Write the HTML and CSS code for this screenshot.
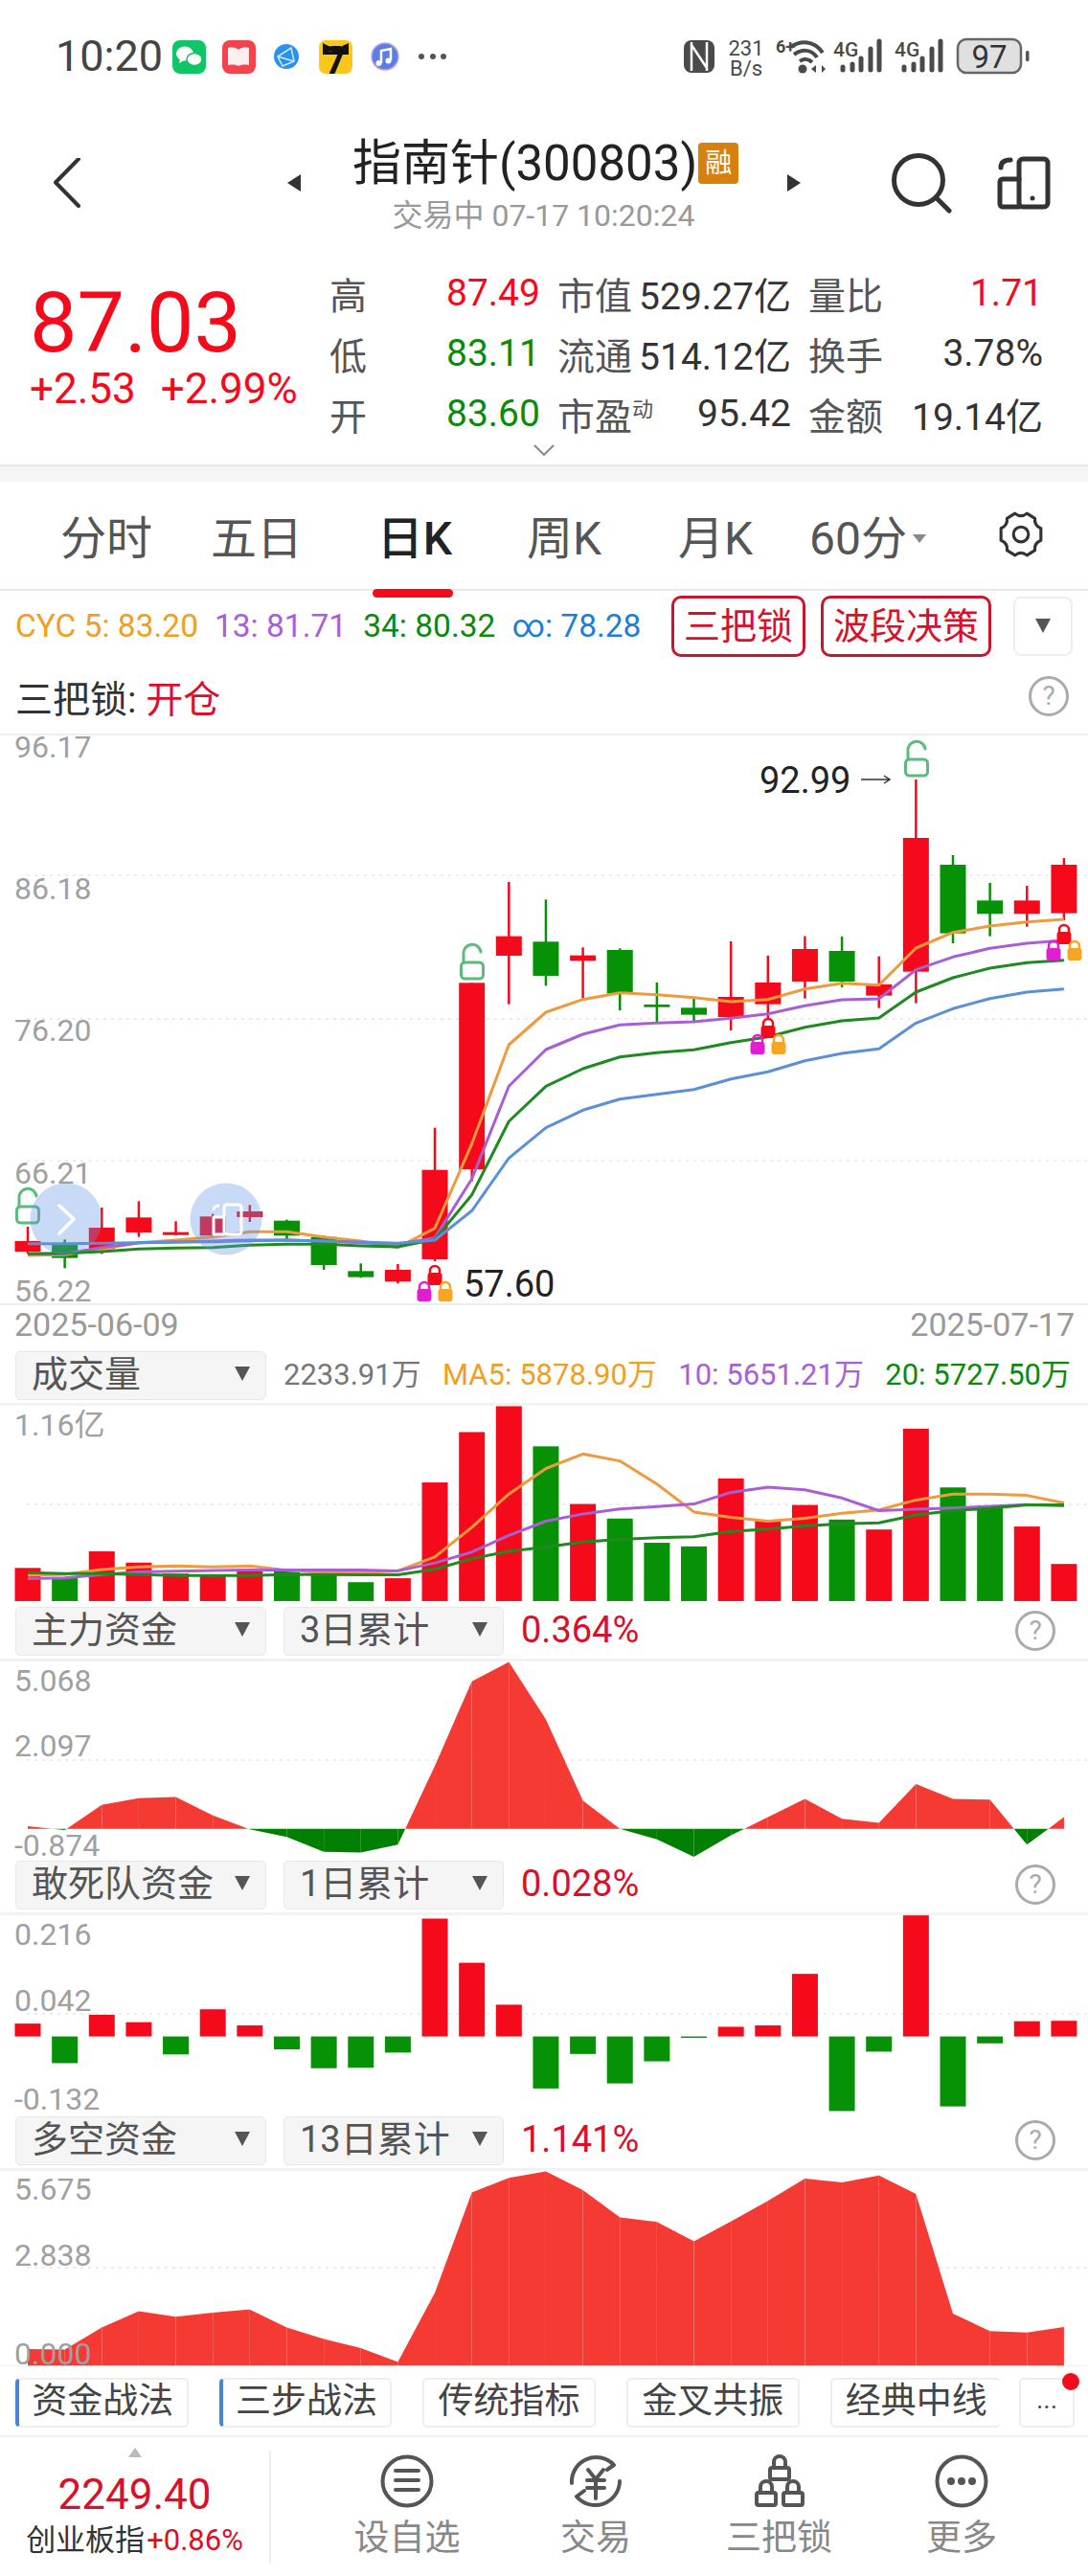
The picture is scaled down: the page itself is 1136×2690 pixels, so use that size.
FILE: index.html
```html
<!DOCTYPE html>
<html lang="zh-CN">
<head>
  <meta charset="UTF-8" />
  <meta name="viewport" content="width=device-width, initial-scale=1.0"/>
  <title>指南针(300803)</title>
  <link rel="stylesheet" href="styles.css">
</head>
<body>
  <div class="statusbar">
    <span class="clock">10:20</span>
    <svg class="status-apps" width="300" height="55" viewBox="170 30 300 55">
      <rect x="180" y="41" width="35" height="35" rx="8" fill="#0fc566"/>
      <ellipse cx="193" cy="55" rx="9" ry="7.500" fill="#fff"/>
      <path d="M188 60l-1 5 5-3z" fill="#fff"/>
      <ellipse cx="203" cy="61" rx="8" ry="6.500" fill="#fff" stroke="#0fc566" stroke-width="1.500"/>
      <rect x="232" y="41" width="35" height="35" rx="8" fill="#f1444f"/>
      <path d="M238 49c6-1 9 0 11 2 2-2 5-3 11-2v18c-6-1-9 0-11 1-2-1-5-2-11-1z" fill="#fdeef0"/>
      <circle cx="299" cy="58" r="13" fill="#2a92ea"/>
      <path d="M290 58l14-9 3 14-12 5zM290 58l17 5" fill="none" stroke="#cfe8fb" stroke-width="1.500"/>
      <rect x="333" y="41" width="35" height="35" rx="7" fill="#fcc71c"/>
      <path d="M337 44l6 3h14l7-3v12h-27z" fill="#111"/>
      <circle cx="345" cy="50" r="2.500" fill="#fcc71c"/>
      <circle cx="357" cy="50" r="2.500" fill="#fcc71c"/>
      <text class="app-seven" x="350.500" y="76" text-anchor="middle">7</text>
      <circle cx="402" cy="58" r="14" fill="#5a7fe0" stroke="#b9a6ee" stroke-width="1.500"/>
      <path d="M398 65V52l10-2v12" fill="none" stroke="#fff" stroke-width="2.500"/>
      <circle cx="395.500" cy="65" r="3" fill="#fff"/>
      <circle cx="405.500" cy="62.500" r="3" fill="#fff"/>
      <circle cx="440" cy="58" r="3" fill="#555"/>
      <circle cx="452" cy="58" r="3" fill="#555"/>
      <circle cx="463" cy="58" r="3" fill="#555"/>
    </svg>
    <svg class="status-right" width="390" height="55" viewBox="700 30 390 55">
      <rect x="714" y="41" width="32" height="34" rx="8" fill="#4a4a4a"/>
      <path d="M722 43v30M738 43v30M722 46l16 24" fill="none" stroke="#fff" stroke-width="2.500"/>
      <text class="st-speed" x="779" y="57" text-anchor="middle">231</text>
      <text class="st-speed" x="779" y="78" text-anchor="middle">B/s</text>
      <text class="st-tiny" x="810" y="54">6+</text>
      <g fill="none" stroke="#4a4a4a" stroke-width="4">
        <path d="M826 48c10-7 24-7 33 6"/>
        <path d="M829 56c8-6 18-6 24 3"/>
        <path d="M835 63c4-3 9-3 13 1"/>
      </g>
      <circle cx="838" cy="71" r="4.500" fill="#4a4a4a"/>
      <path d="M847 71l5-4v8zM855 66v10M858 67l4 4-4 4z" fill="#4a4a4a"/>
      <g id="sig">
        <text class="st-four" x="870" y="58">4G</text>
        <g stroke="#4a4a4a" stroke-width="5" stroke-linecap="round">
          <path d="M880 69v3M890 66v6M899 60v12M909 50v22M918 42v30"/>
        </g>
      </g>
      <use href="#sig" x="64"/>
      <rect x="1000" y="40" width="66" height="35" rx="9" fill="#e0e0e0" stroke="#666" stroke-width="2.500"/>
      <text class="st-batt" x="1033" y="70" text-anchor="middle">97</text>
      <rect x="1071" y="52" width="3.500" height="11" rx="1.500" fill="#555"/>
    </svg>
  </div>

  <div class="titlebar">
    <svg width="28" height="52" viewBox="56 166 28 52"><path d="M82 167L58 191.500 82 216" fill="none" stroke="#333" stroke-width="4" stroke-linecap="round" stroke-linejoin="round"/></svg>
    <span class="tri-left"></span>
    <div class="title-stack">
      <div class="title-line"><span class="title">指南针(300803)</span><span class="rong">融</span></div>
      <div class="subtitle">交易中 07-17 10:20:24</div>
    </div>
    <span class="tri-right"></span>
    <svg class="search-icon" width="64" height="64" viewBox="930 159 64 64" fill="none" stroke="#333" stroke-width="5" stroke-linecap="round"><circle cx="958" cy="188" r="25.500"/><path d="M977 207l13 13"/></svg>
    <svg class="pad-icon" width="58" height="60" viewBox="1039 161 58 60" fill="none" stroke="#333" stroke-width="5" stroke-linecap="round" stroke-linejoin="round"><rect x="1063" y="166" width="30" height="50" rx="4"/><path d="M1063 187h-17a3 3 0 0 0-3 3v23a3 3 0 0 0 3 3h17"/><path d="M1054 167c-6 0-10 2-10 8"/><circle cx="1077" cy="207" r="2.500" fill="#333" stroke="none"/></svg>
  </div>

  <div class="quote">
    <div class="price-box">
      <div class="price">87.03</div>
      <div class="change"><span>+2.53</span><span>+2.99%</span></div>
    </div>
    <div class="quote-table">
      <span class="q-label">高</span><span class="q-num up">87.49</span><span class="q-label">市值</span><span class="q-val">529.27亿</span><span class="q-label q-last">量比</span><span class="q-val up">1.71</span>
      <span class="q-label">低</span><span class="q-num down">83.11</span><span class="q-label">流通</span><span class="q-val">514.12亿</span><span class="q-label q-last">换手</span><span class="q-val">3.78%</span>
      <span class="q-label">开</span><span class="q-num down">83.60</span><span class="q-label">市盈<sup>动</sup></span><span class="q-val">95.42</span><span class="q-label q-last">金额</span><span class="q-val">19.14亿</span>
    </div>
    <svg class="more-chevron" width="22" height="12" viewBox="0 0 22 12"><path d="M1 1l10 10L21 1" fill="none" stroke="#888" stroke-width="2"/></svg>
  </div>

  <div class="band"></div>

  <div class="tabs">
    <span class="tab">分时</span>
    <span class="tab">五日</span>
    <span class="tab active">日K</span>
    <span class="tab">周K</span>
    <span class="tab">月K</span>
    <span class="tab">60分<i class="tab-caret"></i></span>
    <svg class="gear" width="50" height="50" viewBox="0 0 48 48" fill="none" stroke="#333" stroke-width="3" stroke-linejoin="round"><path d="M18 3Q24 8 30 3L38 8Q37 15 44 18V30Q37 33 38 40L30 45Q24 40 18 45L10 40Q11 33 4 30V18Q11 15 10 8Z"/><circle cx="24" cy="24" r="7.500"/></svg>
  </div>

  <div class="cyc-row">
    <span class="c-orange">CYC 5: 83.20</span>
    <span class="c-purple">13: 81.71</span>
    <span class="c-green">34: 80.32</span>
    <span class="c-blue">∞: 78.28</span>
    <span class="red-btn btn-lock">三把锁</span>
    <span class="red-btn btn-wave">波段决策</span>
    <span class="drop-btn"><i class="caret"></i></span>
  </div>

  <div class="lock-row">
    <span>三把锁: <b>开仓</b></span>
    <span class="help">?</span>
  </div>

  <svg class="chart" id="mainChart" width="1136" height="593" viewBox="0 767 1136 593">
    <line class="dash" x1="28" x2="1136" y1="913" y2="913"/>
    <line class="dash" x1="28" x2="1136" y1="1063" y2="1063"/>
    <line class="dash" x1="28" x2="1136" y1="1211" y2="1211"/>
    <g class="labels">
      <text class="axis" x="15" y="790">96.17</text>
      <text class="axis" x="15" y="938">86.18</text>
      <text class="axis" x="15" y="1086">76.20</text>
      <text class="axis" x="15" y="1235">66.21</text>
      <text class="axis" x="15" y="1358">56.22</text>
      <text class="mark" x="793" y="827">92.99</text>
      <path d="M899 813h30M923 809l6 4-6 4" fill="none" stroke="#333" stroke-width="1.500"/>
      <text class="mark" x="484" y="1353">57.60</text>
      <circle cx="69" cy="1272" r="37.500" fill="#6496e6" fill-opacity=".35"/>
      <path d="M62 1258l15 14-15 15" fill="none" stroke="#fff" stroke-width="3.500" stroke-linecap="round" stroke-linejoin="round"/>
      <circle cx="236" cy="1272" r="37.500" fill="#6496e6" fill-opacity=".35"/>
      <g fill="none" stroke="#fff" stroke-width="3" stroke-linejoin="round">
        <rect x="234" y="1257" width="18" height="31" rx="3"/>
        <path d="M234 1270h-11v18h11"/>
        <path d="M229 1258c-4 0-6 1-6 5"/>
      </g>
    </g>
  </svg>

  <div class="dates"><span>2025-06-09</span><span>2025-07-17</span></div>

  <div class="pane-head">
    <span class="sel sel-main">成交量<i class="caret"></i></span>
    <div class="vol-vals">
      <span class="c-gray">2233.91万</span>
      <span class="c-orange">MA5: 5878.90万</span>
      <span class="c-purple">10: 5651.21万</span>
      <span class="c-green">20: 5727.50万</span>
    </div>
  </div>
  <svg class="chart" id="volChart" width="1136" height="204" viewBox="0 1467 1136 204">
    <line class="dash" x1="28" x2="1136" y1="1570" y2="1570"/>
    <g class="labels"><text class="axis" x="15" y="1498">1.16亿</text></g>
  </svg>

  <div class="pane-head gap-a">
    <span class="sel sel-main">主力资金<i class="caret"></i></span>
    <span class="sel sel-sub">3日累计<i class="caret"></i></span>
    <span class="pct">0.364%</span>
    <span class="help">?</span>
  </div>
  <svg class="chart" id="mainFund" width="1136" height="204" viewBox="0 1734 1136 204">
    <line class="dash" x1="28" x2="1136" y1="1837" y2="1837"/>
    <g class="labels">
      <text class="axis" x="15" y="1765">5.068</text>
      <text class="axis" x="15" y="1833">2.097</text>
      <text class="axis" x="15" y="1937">-0.874</text>
    </g>
  </svg>

  <div class="pane-head gap-b">
    <span class="sel sel-main">敢死队资金<i class="caret"></i></span>
    <span class="sel sel-sub">1日累计<i class="caret"></i></span>
    <span class="pct">0.028%</span>
    <span class="help">?</span>
  </div>
  <svg class="chart" id="braveFund" width="1136" height="204" viewBox="0 1999 1136 204">
    <line class="dash" x1="28" x2="1136" y1="2102" y2="2102"/>
    <g class="labels">
      <text class="axis" x="15" y="2030">0.216</text>
      <text class="axis" x="15" y="2099">0.042</text>
      <text class="axis" x="15" y="2202">-0.132</text>
    </g>
  </svg>

  <div class="pane-head gap-a">
    <span class="sel sel-main">多空资金<i class="caret"></i></span>
    <span class="sel sel-sub">13日累计<i class="caret"></i></span>
    <span class="pct">1.141%</span>
    <span class="help">?</span>
  </div>
  <svg class="chart" id="longShort" width="1136" height="203" viewBox="0 2267 1136 203">
    <line class="dash" x1="28" x2="1136" y1="2368" y2="2368"/>
    <g class="labels">
      <text class="axis" x="15" y="2297">5.675</text>
      <text class="axis" x="15" y="2366">2.838</text>
      <text class="axis" x="15" y="2469">0.000</text>
    </g>
  </svg>

  <div class="strategy-tabs">
    <span class="stab marked">资金战法</span>
    <span class="stab marked">三步战法</span>
    <span class="stab">传统指标</span>
    <span class="stab">金叉共振</span>
    <span class="stab cut">经典中线</span>
    <span class="stab more">...<i class="red-dot"></i></span>
  </div>

  <div class="bottom-nav">
    <div class="index-box">
      <i class="index-tri"></i>
      <div class="index-price">2249.40</div>
      <div class="index-name">创业板指<span>+0.86%</span></div>
    </div>
    <div class="nav-items">
      <div class="nav-item">
        <svg width="56" height="56" viewBox="0 0 56 56" fill="none" stroke="#555" stroke-width="4" stroke-linecap="round"><circle cx="28" cy="28" r="25.500"/><path d="M16 17h24M16 27h24M16 37h24"/></svg>
        <span>设自选</span>
      </div>
      <div class="nav-item">
        <svg width="56" height="56" viewBox="0 0 56 56" fill="none" stroke="#555" stroke-width="4" stroke-linecap="round" stroke-linejoin="round"><path d="M3 30A25.500 25.500 0 0 1 47 11l-7 5"/><path d="M53 28A25.500 25.500 0 0 1 8 44l8-6"/><path d="M20 16l8 10 8-10M19 27h18M19 35h18M28 26v20"/></svg>
        <span>交易</span>
      </div>
      <div class="nav-item">
        <svg width="56" height="56" viewBox="0 0 56 56" fill="none" stroke="#555" stroke-width="4" stroke-linejoin="round"><rect x="18" y="14" width="20" height="12" rx="2"/><path d="M22 14V8a6 6 0 0 1 12 0v6"/><rect x="4" y="40" width="20" height="13" rx="2"/><path d="M8 40v-6a6 6 0 0 1 12 0v6"/><rect x="32" y="40" width="20" height="13" rx="2"/><path d="M36 40v-6a6 6 0 0 1 12 0v6"/></svg>
        <span>三把锁</span>
      </div>
      <div class="nav-item">
        <svg width="56" height="56" viewBox="0 0 56 56" fill="none" stroke="#555" stroke-width="4"><circle cx="28" cy="28" r="25.500"/><circle cx="17" cy="28" r="4" fill="#555" stroke="none"/><circle cx="28" cy="28" r="4" fill="#555" stroke="none"/><circle cx="39" cy="28" r="4" fill="#555" stroke="none"/></svg>
        <span>更多</span>
      </div>
    </div>
  </div>

  <script src="chart.js"></script>
</body>
</html>
```

FILE: styles.css
```css
* {
  box-sizing: border-box;
}
html, body {
  margin: 0;
  padding: 0;
}
body {
  width: 1136px;
  height: 2690px;
  overflow: hidden;
  background: #fff;
  color: #333;
  font-family: Roboto, "Noto Sans CJK SC", sans-serif;
}
i {
  font-style: normal;
}

/* status bar */
.statusbar {
  display: flex;
  align-items: center;
  height: 116px;
}
.clock {
  width: 112px;
  margin-left: 58px;
  font-size: 45px;
  color: #444;
}
.status-right {
  margin-left: 230px;
}
.app-seven {
  font-size: 38px;
  font-weight: 700;
  fill: #111;
}
.st-speed {
  font-size: 22px;
  fill: #4a4a4a;
}
.st-tiny {
  font-size: 18px;
  font-weight: 700;
  fill: #4a4a4a;
}
.st-four {
  font-size: 21px;
  font-weight: 500;
  fill: #4a4a4a;
}
.st-batt {
  font-size: 33px;
  fill: #333;
}

/* title */
.titlebar {
  display: flex;
  align-items: center;
  height: 150px;
  padding-left: 56px;
}
.tri-left {
  width: 0;
  height: 0;
  margin-left: 216px;
  border-top: 9px solid transparent;
  border-bottom: 9px solid transparent;
  border-right: 14px solid #333;
}
.tri-right {
  width: 0;
  height: 0;
  border-top: 9px solid transparent;
  border-bottom: 9px solid transparent;
  border-left: 14px solid #333;
}
.title-stack {
  width: 400px;
  margin: 0 54px;
}
.title-line {
  display: flex;
  align-items: center;
  height: 60px;
}
.title {
  margin-top: -6px;
  font-size: 51px;
  white-space: nowrap;
  color: #222;
}
.rong {
  flex: none;
  width: 42px;
  height: 43px;
  margin-top: 2px;
  margin-left: 1px;
  background: #d8800f;
  border-radius: 4px;
  color: #fff;
  font-size: 28px;
  line-height: 43px;
  text-align: center;
}
.subtitle {
  margin-top: 8px;
  margin-left: -1px;
  text-align: center;
  font-size: 32px;
  line-height: 36px;
  color: #999;
  white-space: nowrap;
}
.search-icon {
  margin-left: 95px;
}
.pad-icon {
  margin-left: 45px;
}

/* quote */
.quote {
  position: relative;
  display: flex;
  height: 219px;
  padding-top: 8px;
}
.price-box {
  width: 344px;
  padding-left: 31px;
  color: #f50a1c;
}
.price {
  margin-top: 22px;
  font-size: 88px;
  line-height: 82px;
}
.change {
  display: flex;
  gap: 26px;
  margin-top: 9px;
  font-size: 44px;
  line-height: 38px;
}
.quote-table {
  display: grid;
  grid-template-columns: 122px 116px 76px 168px 94px 169px;
  grid-auto-rows: 63px;
  align-items: center;
  font-size: 39px;
}
.q-label {
  color: #555;
  white-space: nowrap;
}
.q-label sup {
  font-size: 22px;
  line-height: 0;
}
.q-last {
  padding-left: 18px;
}
.q-val {
  text-align: right;
  color: #333;
}
.up {
  color: #f50a1c;
}
.q-val.up {
  color: #f50a1c;
}
.down {
  color: #088c08;
}
.more-chevron {
  position: absolute;
  left: 557px;
  top: 198px;
}
.band {
  height: 18px;
  background: #f5f5f5;
  border-top: 2px solid #e8e8e8;
}

/* period tabs */
.tabs {
  display: grid;
  grid-template-columns: 158px 156px 174px 138px 178px 140px 1fr;
  align-items: center;
  height: 114px;
  padding-left: 32px;
  padding-bottom: 3px;
  border-bottom: 2px solid #eaeaea;
}
.tab {
  position: relative;
  font-size: 48px;
  color: #555;
  text-align: center;
  white-space: nowrap;
}
.tab.active {
  color: #222;
  font-weight: 500;
}
.tab.active::after {
  content: "";
  position: absolute;
  left: 43px;
  bottom: -31px;
  width: 84px;
  height: 9px;
  background: #f50a1c;
  border-radius: 5px;
}
.tab-caret {
  display: inline-block;
  width: 0;
  height: 0;
  margin-left: 6px;
  vertical-align: 12px;
  border-left: 7px solid transparent;
  border-right: 7px solid transparent;
  border-top: 9px solid #888;
}
.gear {
  justify-self: end;
  margin-right: 45px;
}

/* indicator legend */
.cyc-row {
  display: flex;
  align-items: center;
  height: 73px;
  padding-left: 16px;
  font-size: 33.5px;
  line-height: 1;
  white-space: nowrap;
}
.cyc-row span + span {
  margin-left: 17px;
}
.c-orange {
  color: #f0a020;
}
.c-purple {
  color: #a860d8;
}
.c-green {
  color: #0a8a0a;
}
.c-blue {
  color: #1a7fd8;
}
.c-gray {
  color: #777;
}
.cyc-row .red-btn {
  display: flex;
  align-items: center;
  justify-content: center;
  height: 64px;
  border: 3px solid #c8162c;
  border-radius: 10px;
  color: #d8102a;
  font-size: 38px;
}
.cyc-row .btn-lock {
  width: 140px;
  margin-left: auto;
}
.cyc-row .btn-wave {
  width: 178px;
  margin-left: 16px;
}
.cyc-row .drop-btn {
  display: flex;
  align-items: center;
  justify-content: center;
  width: 62px;
  height: 62px;
  margin-left: 23px;
  margin-right: 16px;
  border: 2px solid #eee;
  border-radius: 8px;
}
.caret {
  width: 0;
  height: 0;
  border-left: 8px solid transparent;
  border-right: 8px solid transparent;
  border-top: 15px solid #555;
}
.lock-row {
  display: flex;
  align-items: center;
  justify-content: space-between;
  height: 78px;
  padding: 0 20px 2px 16px;
  border-bottom: 2px solid #eee;
  font-size: 39px;
  color: #333;
}
.lock-row b {
  font-weight: 400;
  color: #d8102a;
}
.help {
  display: flex;
  align-items: center;
  justify-content: center;
  width: 42px;
  height: 42px;
  border: 3px solid #aaa;
  border-radius: 50%;
  color: #aaa;
  font-size: 28px;
  line-height: 1;
}

/* charts */
.chart {
  display: block;
  overflow: visible;
}
.dash {
  stroke: #e6e6e6;
  stroke-width: 1.5;
  stroke-dasharray: 3 5;
}
.axis {
  font-size: 32px;
  fill: #a0a0a0;
}
.mark {
  font-size: 38px;
  fill: #222;
}
.dates {
  display: flex;
  justify-content: space-between;
  height: 50px;
  padding: 1px 14px 0 15px;
  border-top: 2px solid #eee;
  font-size: 34px;
  line-height: 38px;
  color: #999;
}
.pane-head {
  display: flex;
  align-items: flex-start;
  gap: 18px;
  height: 57px;
  padding-left: 16px;
  padding-right: 34px;
  border-bottom: 3px solid #f2f2f2;
}
.gap-a {
  margin-top: 6px;
}
.gap-b {
  margin-top: 4px;
}
.sel {
  display: flex;
  align-items: center;
  justify-content: space-between;
  height: 51px;
  padding: 0 16px 4px 16px;
  background: #f5f5f5;
  border: 1px solid #e8e8e8;
  border-radius: 5px;
  font-size: 38px;
  line-height: 1;
  color: #555;
  white-space: nowrap;
}
.sel-main {
  width: 262px;
}
.sel-sub {
  width: 230px;
}
.pct {
  font-size: 38px;
  line-height: 48px;
  color: #d8102a;
}
.pane-head .help {
  margin-left: auto;
  margin-top: 4px;
}
.vol-vals {
  display: flex;
  flex: 1;
  justify-content: space-between;
  margin-right: -16px;
  font-size: 31px;
  line-height: 49px;
  white-space: nowrap;
}

/* strategy tabs */
.strategy-tabs {
  display: flex;
  gap: 32px;
  height: 75px;
  padding: 12px 14px 0 16px;
  border-top: 1px solid #f0f0f0;
  border-bottom: 2px solid #eee;
}
.stab {
  position: relative;
  width: 181px;
  height: 52px;
  background: #fff;
  border: 2px solid #eee;
  border-radius: 5px;
  color: #444;
  font-size: 37px;
  line-height: 46px;
  text-align: center;
  white-space: nowrap;
}
.stab.marked {
  border-left: 4px solid #4a84d8;
}
.stab.cut {
  border-right: 0;
  width: 179px;
}
.stab.more {
  width: 58px;
  margin-left: -13px;
  font-size: 28px;
  line-height: 42px;
}
.red-dot {
  position: absolute;
  top: -7px;
  right: -7px;
  width: 18px;
  height: 18px;
  background: #f50a1c;
  border-radius: 50%;
}

/* bottom nav */
.bottom-nav {
  display: flex;
  height: 144px;
}
.index-box {
  display: flex;
  flex-direction: column;
  align-items: center;
  width: 281px;
  padding-top: 11px;
}
.index-tri {
  width: 0;
  height: 0;
  border-left: 7px solid transparent;
  border-right: 7px solid transparent;
  border-bottom: 10px solid #bbb;
}
.index-price {
  margin-top: 14px;
  font-size: 44px;
  line-height: 50px;
  color: #d8102a;
}
.index-name {
  margin-top: 5px;
  font-size: 31px;
  line-height: 36px;
  color: #333;
  white-space: nowrap;
}
.index-name span {
  margin-left: 2px;
  color: #d8102a;
}
.nav-items {
  display: grid;
  grid-template-columns: 196px 198px 185px 196px;
  height: 118px;
  margin-top: 14px;
  padding-top: 4px;
  padding-left: 44px;
  border-left: 2px solid #eee;
}
.nav-item {
  display: flex;
  flex-direction: column;
  align-items: center;
  font-size: 37px;
  line-height: 44px;
  color: #888;
}
.nav-item span {
  margin-top: 10px;
}
```

FILE: chart.js
```js
const NS = 'http://www.w3.org/2000/svg';
const RED = '#f50a1c';
const GREEN = '#079107';
const AREA_RED = '#f43a33';
const AREA_GREEN = '#007f00';
const BAR_W = 27;

const colX = i => 29 + 38.64 * i;

// all y values below were read from the picture, scaled per pane by toY
function add(svg, tag, attrs) {
  const el = document.createElementNS(NS, tag);
  Object.keys(attrs).forEach(k => el.setAttribute(k, attrs[k]));
  svg.insertBefore(el, svg.querySelector('.labels'));
  return el;
}

function drawLine(svg, values, toY, color, width) {
  const points = values.map((v, i) => `${colX(i).toFixed(1)},${toY(v).toFixed(1)}`).join(' ');
  add(svg, 'polyline', {
    points,
    fill: 'none',
    stroke: color,
    'stroke-width': width,
    'stroke-linejoin': 'round'
  });
}

function drawBar(svg, i, y1, y2, color) {
  add(svg, 'rect', {
    x: colX(i) - BAR_W / 2,
    y: Math.min(y1, y2),
    width: BAR_W,
    height: Math.max(Math.abs(y2 - y1), 1.5),
    fill: color
  });
}

// one polygon per column gap, split where the value crosses zero
function drawArea(svg, values, toY, zero) {
  const y0 = toY(zero);
  const quad = (x1, y1, x2, y2, color) => add(svg, 'polygon', {
    points: `${x1},${y0} ${x1},${y1} ${x2},${y2} ${x2},${y0}`,
    fill: color
  });
  for (let i = 0; i < values.length - 1; i++) {
    const x1 = colX(i);
    const x2 = colX(i + 1);
    const y1 = toY(values[i]);
    const y2 = toY(values[i + 1]);
    if ((y1 - y0) * (y2 - y0) >= 0) {
      quad(x1, y1, x2, y2, y1 <= y0 && y2 <= y0 ? AREA_RED : AREA_GREEN);
    } else {
      const xm = x1 + (x2 - x1) * (y0 - y1) / (y2 - y1);
      quad(x1, y1, xm, y0, y1 < y0 ? AREA_RED : AREA_GREEN);
      quad(xm, y0, x2, y2, y2 < y0 ? AREA_RED : AREA_GREEN);
    }
  }
}

function drawLock(svg, cx, top, color) {
  add(svg, 'path', {
    d: `M${cx - 5} ${top + 10}v-4a5 5 0 0 1 10 0v4`,
    fill: 'none',
    stroke: color,
    'stroke-width': 2.5
  });
  add(svg, 'rect', { x: cx - 7.5, y: top + 8, width: 15, height: 13, rx: 3, fill: color });
}

function drawOpenLock(svg, left, top) {
  const green = '#5cba7d';
  add(svg, 'path', {
    d: `M${left + 4} ${top + 18}v-8a9 9 0 0 1 18 -3`,
    fill: 'none',
    stroke: green,
    'stroke-width': 3,
    'stroke-linecap': 'round'
  });
  add(svg, 'rect', {
    x: left + 1.5,
    y: top + 18,
    width: 23,
    height: 17,
    rx: 4,
    fill: 'none',
    stroke: green,
    'stroke-width': 3
  });
}

// candles: wick top, body top, body bottom, wick bottom, r or g
const candles = [
  [1080, 1125, 1158, 1165, 'r'], [1120, 1135, 1178, 1210, 'g'], [1020, 1083, 1150, 1165, 'r'],
  [1000, 1051, 1098, 1112, 'r'], [1063, 1097, 1106, 1107, 'r'], [1040, 1048, 1108, 1110, 'r'],
  [1012, 1032, 1050, 1065, 'r'], [1058, 1061, 1108, 1120, 'g'], [1108, 1112, 1200, 1215, 'g'],
  [1195, 1219, 1238, 1240, 'g'], [1197, 1215, 1252, 1258, 'r'], [770, 902, 1182, 1188, 'r'],
  [316, 316, 900, 938, 'r'], [0, 170, 231, 383, 'r'], [55, 187, 294, 325, 'g'],
  [205, 230, 247, 365, 'r'], [208, 213, 350, 402, 'g'], [315, 384, 392, 440, 'g'],
  [360, 394, 416, 435, 'g'], [186, 360, 423, 465, 'r'], [231, 315, 383, 430, 'r'],
  [170, 210, 312, 365, 'r'], [171, 216, 312, 330, 'g'], [233, 321, 356, 395, 'r'],
  [-321, -138, 281, 380, 'r'], [-84, -54, 161, 192, 'g'], [3, 58, 100, 170, 'g'],
  [12, 58, 100, 140, 'r'], [-75, -54, 98, 120, 'r']
];

const mainSvg = document.getElementById('mainChart');
const mainY = z => 920 + z / 3;

candles.forEach((c, i) => {
  const color = c[4] === 'r' ? RED : GREEN;
  add(mainSvg, 'line', {
    x1: colX(i), x2: colX(i), y1: mainY(c[0]), y2: mainY(c[3]),
    stroke: color, 'stroke-width': 2.5
  });
  drawBar(mainSvg, i, mainY(c[1]), mainY(c[2]), color);
});

drawLine(mainSvg, [1170, 1168, 1150, 1130, 1122, 1112, 1096, 1096, 1112, 1125, 1145, 1085, 820, 510, 408, 368, 347, 353, 362, 375, 368, 335, 317, 323, 207, 158, 138, 125, 117], mainY, '#ee9a3e', 3);
drawLine(mainSvg, [1165, 1165, 1145, 1130, 1128, 1125, 1122, 1122, 1125, 1130, 1135, 1115, 930, 640, 525, 477, 448, 442, 438, 427, 413, 388, 369, 366, 275, 235, 208, 192, 183], mainY, '#a95fd4', 3);
drawLine(mainSvg, [1165, 1163, 1158, 1150, 1147, 1145, 1138, 1135, 1135, 1140, 1143, 1120, 980, 750, 640, 585, 548, 535, 526, 503, 485, 455, 435, 426, 345, 300, 270, 253, 245], mainY, '#1f8a1f', 3);
drawLine(mainSvg, [1133, 1133, 1132, 1130, 1128, 1127, 1124, 1122, 1125, 1128, 1132, 1122, 1030, 865, 770, 715, 680, 665, 650, 617, 595, 560, 537, 523, 442, 397, 365, 345, 335], mainY, '#5b8fd8', 3);

drawOpenLock(mainSvg, 16, 1241);
drawOpenLock(mainSvg, 480, 986);
drawOpenLock(mainSvg, 944, 774);

[[454, 1320], [802, 1062], [1111, 964]].forEach(([x, y]) => {
  drawLock(mainSvg, x, y, RED);
  drawLock(mainSvg, x - 11, y + 17, '#e020d0');
  drawLock(mainSvg, x + 11, y + 17, '#f5a623');
});

// volume
const volSvg = document.getElementById('volChart');
const volY = z => 1400 + z / 2.89;
const volTops = [683, 712, 633, 667, 700, 705, 690, 693, 702, 726, 714, 425, 273, 195, 316, 490, 534, 607, 618, 413, 540, 493, 537, 567, 263, 440, 500, 558, 671];
volTops.forEach((top, i) => {
  drawBar(volSvg, i, volY(top), volY(783), candles[i][4] === 'r' ? RED : GREEN);
});
drawLine(volSvg, [705, 702, 688, 680, 677, 680, 677, 690, 697, 697, 692, 650, 560, 460, 383, 339, 360, 430, 514, 530, 542, 533, 518, 508, 478, 460, 460, 464, 487], volY, '#ee9a3e', 3);
drawLine(volSvg, [715, 713, 703, 695, 693, 691, 689, 689, 689, 689, 692, 668, 635, 585, 542, 520, 505, 498, 490, 455, 439, 447, 472, 510, 506, 502, 497, 492, 496], volY, '#a95fd4', 3);
drawLine(volSvg, [697, 700, 700, 703, 706, 706, 706, 703, 703, 704, 704, 687, 655, 633, 620, 605, 597, 592, 589, 573, 566, 556, 550, 547, 523, 510, 503, 493, 493], volY, '#1f8a1f', 3);

// main force money
drawArea(document.getElementById('mainFund'),
  [1462, 1474, 1398, 1378, 1374, 1430, 1472, 1495, 1540, 1542, 1518, 1280, 1025, 967, 1140, 1385, 1470, 1502, 1555, 1490, 1435, 1380, 1440, 1452, 1335, 1380, 1382, 1518, 1435],
  z => 1400 + z / 2.89, 1470);

// brave squad money
const braveSvg = document.getElementById('braveFund');
const braveY = z => 1940 + z / 2.08;
[358, 444, 339, 355, 425, 327, 362, 414, 455, 454, 421, 130, 226, 317, 499, 424, 488, 440, 388, 365, 362, 250, 548, 419, 123, 538, 401, 353, 352].forEach((v, i) => {
  drawBar(braveSvg, i, braveY(v), braveY(386), v < 386 ? RED : GREEN);
});

// long short money
drawArea(document.getElementById('longShort'),
  [1067, 1068, 1020, 985, 997, 988, 981, 1020, 1045, 1065, 1095, 945, 727, 695, 681, 722, 781, 791, 833, 790, 745, 697, 705, 690, 730, 990, 1028, 1031, 1019],
  z => 1940 + z / 2.08, 1103);
```
